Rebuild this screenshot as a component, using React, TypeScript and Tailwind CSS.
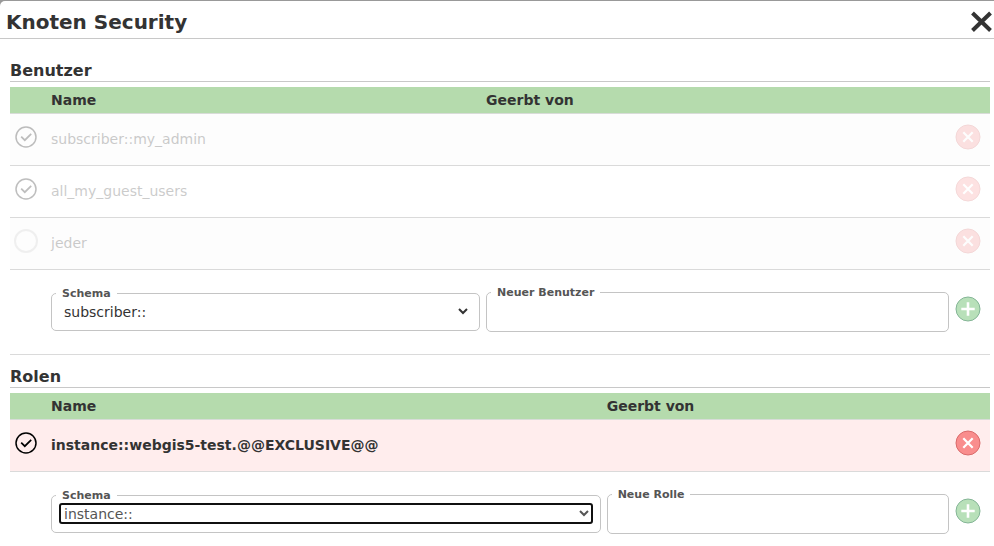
import React, { useState } from 'react';
import clsx from 'clsx';

interface Rule {
  name: string;
  granted: boolean;
  inherited: boolean;
}

interface SecurityTableProps {
  id: string;
  title: string;
  rules: Rule[];
  schemas: string[];
  inputLabel: string;
  nameColumn: string;
  activeSchema?: boolean;
}

const users: Rule[] = [
  { name: 'subscriber::my_admin', granted: true, inherited: true },
  { name: 'all_my_guest_users', granted: true, inherited: true },
  { name: 'jeder', granted: false, inherited: true },
];

const roles: Rule[] = [
  { name: 'instance::webgis5-test.@@EXCLUSIVE@@', granted: true, inherited: false },
];

const CheckIcon: React.FC<{ checked: boolean }> = ({ checked }) => (
  <svg viewBox="0 0 26 26" fill="none" className="pointer-events-none block size-full">
    {checked ? (
      <>
        <circle cx="13" cy="13" r="10" stroke="#000" strokeWidth="1.5" />
        <path d="M8.2 12.6l3.6 3.6 6.4-6.4" stroke="#000" strokeWidth="1.7" />
      </>
    ) : (
      <circle cx="13" cy="13" r="11" stroke="#c8c8c8" strokeWidth="2" />
    )}
  </svg>
);

const RemoveIcon = () => (
  <svg viewBox="0 0 26 26" fill="none" className="block size-full">
    <circle cx="13" cy="13" r="12" fill="#f98d8d" stroke="#d96a6a" strokeWidth="1" />
    <path d="M8.3 8.3l9.4 9.4M17.7 8.3l-9.4 9.4" stroke="#fff" strokeWidth="2.2" />
  </svg>
);

const AddIcon = () => (
  <svg viewBox="0 0 26 26" fill="none" className="block size-full">
    <circle cx="13" cy="13" r="12" fill="#b8e0b9" stroke="#84b596" strokeWidth="1" />
    <path d="M13 6.3v13.4M6.3 13h13.4" stroke="#fff" strokeWidth="2.6" />
  </svg>
);

const SecurityTable: React.FC<SecurityTableProps> = ({
  id,
  title,
  rules,
  schemas,
  inputLabel,
  nameColumn,
  activeSchema,
}) => {
  const [granted, setGranted] = useState(rules.map((rule) => rule.granted));

  const toggle = (index: number) =>
    setGranted(granted.map((value, i) => (i === index ? !value : value)));

  return (
    <section>
      <h2 className="mb-[5px] border-b border-[#c8c8c8] text-base/[20px] font-bold">{title}</h2>
      <table className="w-full table-fixed border-separate border-spacing-0 text-left text-sm/[26px]">
        <colgroup>
          <col className="w-[41px]" />
          <col className={nameColumn} />
          <col />
          <col className="w-[35px]" />
        </colgroup>
        <thead>
          <tr className="bg-[#b5dbad]">
            <th className="border-b border-[#d8dcd8] p-0"></th>
            <th className="border-b border-[#d8dcd8] p-0 font-bold">Name</th>
            <th className="border-b border-[#d8dcd8] p-0 font-bold">Geerbt von</th>
            <th className="border-b border-[#d8dcd8] p-0"></th>
          </tr>
        </thead>
        <tbody>
          {rules.map((rule, index) => (
            <tr
              key={rule.name}
              className={clsx(
                'h-[52px]',
                rule.inherited ? 'odd:bg-[#fdfdfd]' : 'bg-[#ffeded] font-bold'
              )}
            >
              <td className="border-b border-[#dadada] p-0 pt-[10px] pl-[3px] align-top">
                <label className={clsx('relative block size-[26px]', rule.inherited && 'opacity-25')}>
                  <input
                    type="checkbox"
                    aria-label={rule.name}
                    className="absolute inset-0 size-full appearance-none rounded-full"
                    checked={granted[index]}
                    onChange={() => toggle(index)}
                  />
                  <CheckIcon checked={granted[index]} />
                </label>
              </td>
              <td className="border-b border-[#dadada] p-0 pb-[2px]">
                <span className={clsx(rule.inherited && 'opacity-25')}>{rule.name}</span>
              </td>
              <td className="border-b border-[#dadada] p-0"></td>
              <td className="border-b border-[#dadada] p-0 pt-[10px] align-top">
                <button
                  type="button"
                  aria-label={`${rule.name} entfernen`}
                  className={clsx('block size-[26px]', rule.inherited && 'opacity-25')}
                >
                  <RemoveIcon />
                </button>
              </td>
            </tr>
          ))}
          <tr>
            <td className="border-b border-[#dadada] p-0"></td>
            <td className="border-b border-[#dadada] p-0 pt-[15px] pr-[6px] pb-[22px]">
              <fieldset className="min-w-0 rounded-[5px] border border-[#c4c4c4] px-2 pt-[2px] pb-[9px]">
                <legend className="-ml-1 px-[6px] pt-[2px] text-[11px]/[12px] font-bold text-[#555]">
                  <label htmlFor={`${id}-schema`}>Schema</label>
                </legend>
                <select
                  id={`${id}-schema`}
                  className={clsx(
                    'block h-[19px] w-full rounded-[2px] text-sm/[19px]',
                    activeSchema
                      ? 'text-[#555] outline-2 -outline-offset-1 outline-[#101010]'
                      : 'text-[#333]'
                  )}
                >
                  {schemas.map((schema) => (
                    <option key={schema}>{schema}</option>
                  ))}
                </select>
              </fieldset>
            </td>
            <td className="border-b border-[#dadada] p-0 pt-[15px] pr-[6px] pb-[22px]">
              <fieldset className="min-w-0 rounded-[5px] border border-[#c4c4c4] px-2">
                <legend className="-ml-1 px-[6px] pt-[2px] text-[11px]/[12px] font-bold text-[#555]">
                  <label htmlFor={`${id}-name`}>{inputLabel}</label>
                </legend>
                <input
                  id={`${id}-name`}
                  type="text"
                  className="block h-8 w-full bg-transparent px-1 outline-none"
                />
              </fieldset>
            </td>
            <td className="border-b border-[#dadada] p-0 pt-[15px] pb-[22px]">
              <button type="button" aria-label="Hinzufügen" className="block size-[26px]">
                <AddIcon />
              </button>
            </td>
          </tr>
        </tbody>
      </table>
    </section>
  );
};

export default function App() {
  return (
    <div className="h-screen overflow-hidden bg-[#999] pt-px font-['Verdana','DejaVu_Sans',sans-serif] text-[#333]">
      <div className="min-h-full rounded-tl-[5px] bg-white">
        <header className="flex h-[38px] items-center justify-between border-b border-[#c8c8c8] pt-1 pl-[6px]">
          <h1 className="text-xl font-bold">Knoten Security</h1>
          <button type="button" aria-label="Schließen" className="block size-6">
            <svg viewBox="0 0 24 24" fill="none" className="block size-full">
              <path d="M2.5 3l18 17.5M20.5 3l-18 17.5" stroke="#333" strokeWidth="4" />
            </svg>
          </button>
        </header>
        <main className="flex flex-col gap-3 pt-[22px] pr-1 pl-[10px]">
          <SecurityTable
            id="users"
            title="Benutzer"
            rules={users}
            schemas={['subscriber::']}
            inputLabel="Neuer Benutzer"
            nameColumn="w-[44.4%]"
          />
          <SecurityTable
            id="roles"
            title="Rolen"
            rules={roles}
            schemas={['instance::']}
            inputLabel="Neue Rolle"
            nameColumn="w-[56.7%]"
            activeSchema
          />
        </main>
      </div>
    </div>
  );
}
